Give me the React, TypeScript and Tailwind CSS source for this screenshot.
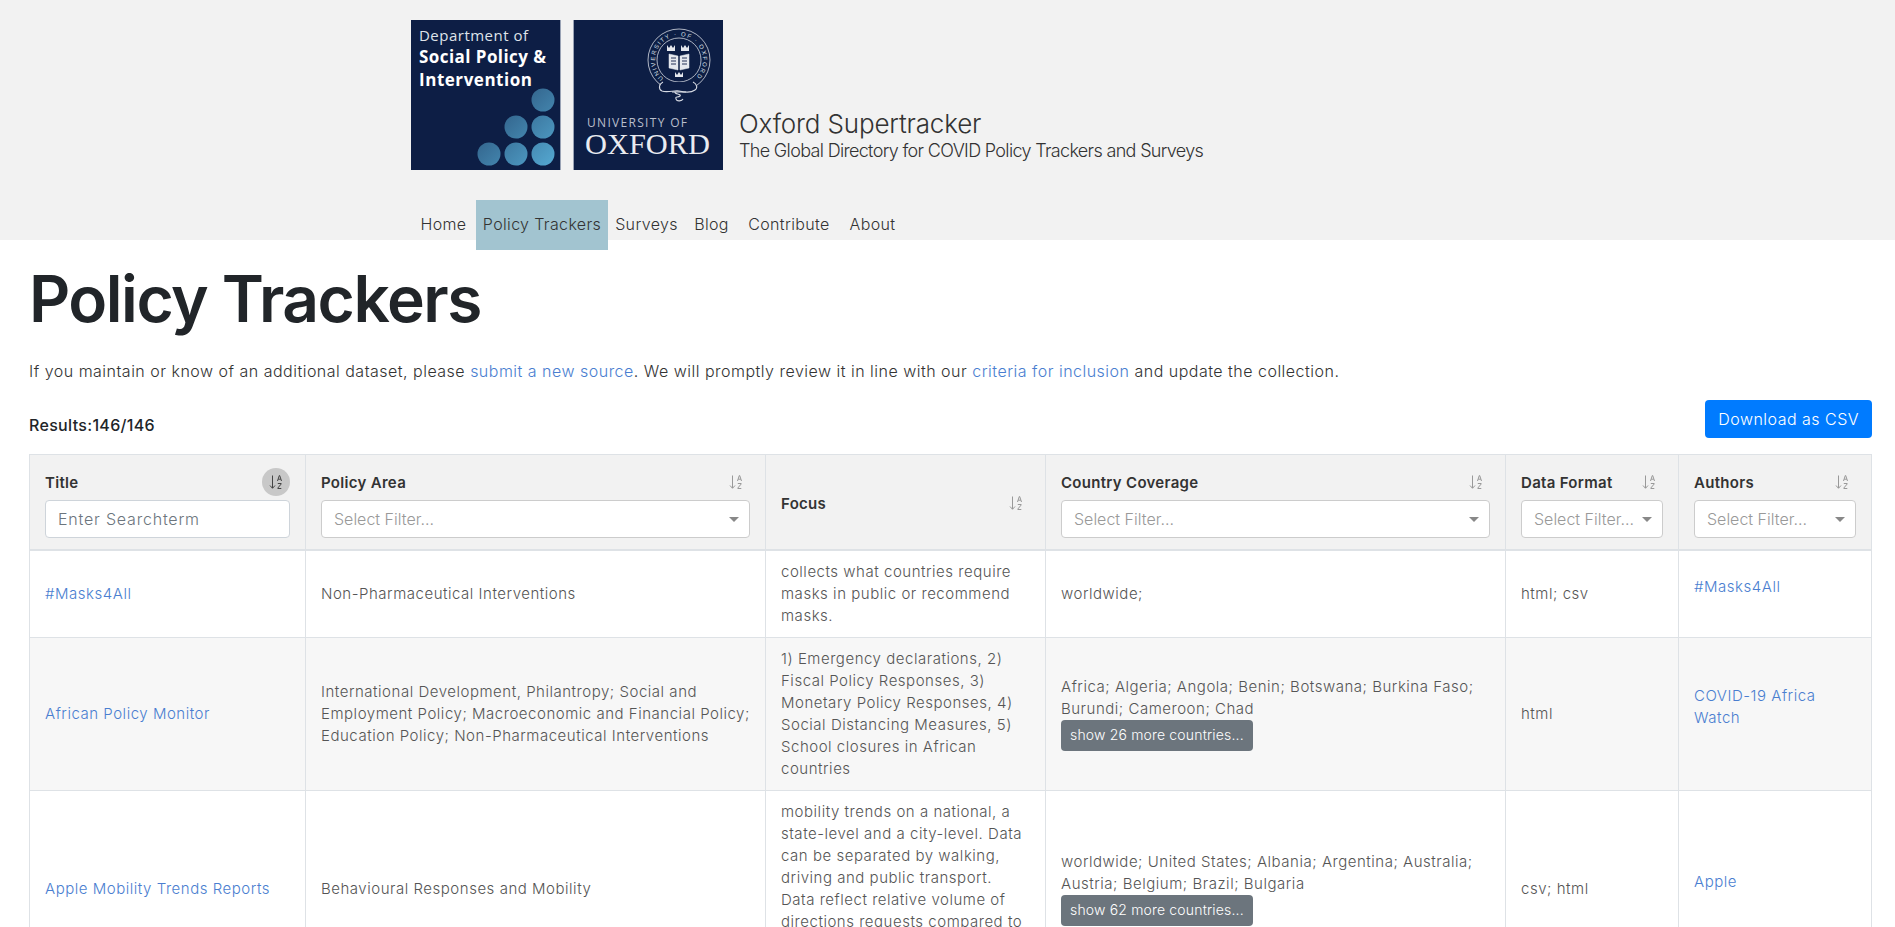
import React from 'react';

const SortIcon = ({ active }: { active?: boolean }) => (
  <span className={`flex h-7 w-7 items-center justify-center rounded-full ${active ? 'bg-[#c8c8c8] text-[#444]' : 'text-[#999]'}`}>
    <svg width="16" height="16" viewBox="0 0 16 16" fill="none" stroke="currentColor" strokeWidth="1">
      <path d="M4.5 1.5v12.5M2 11.5l2.5 2.8 2.5-2.8" />
      <path d="M9.5 7l1.8-5.5h.4L13.500 7M10.200 5.200h2.600" />
      <path d="M9.800 9.500h3.400v.5l-3.400 4v.5h3.500" />
    </svg>
  </span>
);

const FilterSelect = () => (
  <div className="mt-[4px] flex h-[38px] items-center rounded border border-[#cccccc] bg-white pl-[12px] pr-[10px] text-[16px] font-light tracking-normal text-[#999]">
    <span className="min-w-0 flex-1 truncate">Select Filter...</span>
    <span className="ml-1 h-0 w-0 border-x-[5px] border-t-[5px] border-x-transparent border-t-[#888]" />
  </div>
);

const Header = ({ title, filter, sort }: { title: string; filter?: React.ReactNode; sort?: boolean }) => (
  <th className="border border-[#dee2e6] border-b-2 px-[15px] pb-[11px] pt-[13px] text-left align-middle">
    <div className="flex h-7 items-center justify-between">
      <span className="pt-[1px] text-[15px] font-semibold tracking-[0.02em] text-[#333]">{title}</span>
      <SortIcon active={sort} />
    </div>
    {filter}
  </th>
);

const DeptLogo = () => (
  <svg width="150" height="150" viewBox="0 0 150 150" className="shrink-0">
    <defs>
      <linearGradient id="dots" gradientUnits="userSpaceOnUse" x1="80" y1="80" x2="145" y2="145">
        <stop offset="0" stopColor="#2a537b" />
        <stop offset="1" stopColor="#55a9d2" />
      </linearGradient>
    </defs>
    <rect width="150" height="150" fill="#0d1e45" />
    <rect x="149" width="1" height="150" fill="#9aa3b5" />
    <g fontFamily="'Open Sans', sans-serif" fill="#fff">
      <text x="8" y="21" fontSize="15" textLength="109" fill="#dfe3ea">Department of</text>
      <text x="8" y="43" fontSize="17" fontWeight="700" textLength="127">Social Policy &amp;</text>
      <text x="8" y="66" fontSize="17" fontWeight="700" textLength="113">Intervention</text>
    </g>
    {[[132, 80], [105, 107], [132, 107], [78, 134], [105, 134], [132, 134]].map(([cx, cy]) => (
      <circle key={`${cx}-${cy}`} cx={cx} cy={cy} r="11.500" fill="url(#dots)" />
    ))}
  </svg>
);

const OxfordLogo = () => (
  <svg width="150" height="150" viewBox="0 0 150 150" className="shrink-0">
    <rect width="150" height="150" fill="#0d1e45" />
    <rect width="1" height="150" fill="#9aa3b5" />
    <g fill="none" stroke="#d5d9e2">
      <circle cx="106" cy="40" r="31" strokeWidth="0.8" />
      <circle cx="106" cy="40" r="22" strokeWidth="0.8" />
      <path d="M96 34v14l9 2V36zM116 34v14l-9 2V36z" fill="#e5e8ee" stroke="#e5e8ee" strokeWidth="0.5" />
      <path d="M98 38h5M98 41h5M98 44h5M109 38h5M109 41h5M109 44h5" stroke="#0d1e45" strokeWidth="0.9" />
      <path d="M94 25l2 3 2-3 2 3 2-3v6h-8zM108 25l2 3 2-3 2 3 2-3v6h-8zM102 52l2 3 2-3 2 3 2-3v5h-8z" fill="#e5e8ee" stroke="none" />
      <path d="M90 62c-4 2-5 7-1 9 5 2 13-1 17 0s12 2 16-1c3-2 2-6-2-8" strokeWidth="1.100" fill="#0d1e45" />
      <path d="M99 72h14M102 72c-1 2 7 2 5 4s-5 0-4 3 6 2 7 0" strokeWidth="1.100" />
    </g>
    <path id="seal" d="M90.600 58.400a24 24 0 1 1 30.800 0" fill="none" />
    <text fontFamily="'Liberation Sans', sans-serif" fontSize="6" fill="#dfe3ea">
      <textPath href="#seal" textLength="114">UNIVERSITY · OF · OXFORD</textPath>
    </text>
    <text x="14" y="107" fontFamily="'Open Sans', sans-serif" fontSize="12" fill="#b9bfcc" textLength="100">UNIVERSITY OF</text>
    <text x="12" y="134" fontFamily="'Liberation Serif', serif" fontSize="30" fill="#e9ebf0" textLength="125" lengthAdjust="spacingAndGlyphs">OXFORD</text>
  </svg>
);

const CountryButton = ({ n }: { n: number }) => (
  <button className="mb-[2px] block h-[31px] rounded bg-[#6c757d] px-[9px] text-[14px] font-light tracking-[0.012em] text-white">
    show {n} more countries...
  </button>
);

const cell = 'border border-[#dee2e6] px-[15px] py-[10px] align-middle';

const navItems = [
  { label: 'Home', width: 'w-[65px]' },
  { label: 'Policy Trackers', width: 'w-[132px] bg-[#a2c4d0]' },
  { label: 'Surveys', width: 'w-[77px]' },
  { label: 'Blog', width: 'w-[53px]' },
  { label: 'Contribute', width: 'w-[102px]' },
  { label: 'About', width: 'w-[65px]' },
];

const rows = [
  {
    title: '#Masks4All',
    area: 'Non-Pharmaceutical Interventions',
    focus: 'collects what countries require masks in public or recommend masks.',
    countries: 'worldwide;',
    more: 0,
    format: 'html; csv',
    authors: '#Masks4All',
  },
  {
    title: 'African Policy Monitor',
    area: 'International Development, Philantropy; Social and Employment Policy; Macroeconomic and Financial Policy; Education Policy; Non-Pharmaceutical Interventions',
    focus: '1) Emergency declarations, 2) Fiscal Policy Responses, 3) Monetary Policy Responses, 4) Social Distancing Measures, 5) School closures in African countries',
    countries: 'Africa; Algeria; Angola; Benin; Botswana; Burkina Faso; Burundi; Cameroon; Chad',
    more: 26,
    format: 'html',
    authors: 'COVID-19 Africa Watch',
  },
  {
    title: 'Apple Mobility Trends Reports',
    area: 'Behavioural Responses and Mobility',
    focus: 'mobility trends on a national, a state-level and a city-level. Data can be separated by walking, driving and public transport. Data reflect relative volume of directions requests compared to a baseline volume on January 13th, 2020.',
    countries: 'worldwide; United States; Albania; Argentina; Australia; Austria; Belgium; Brazil; Bulgaria',
    more: 62,
    format: 'csv; html',
    authors: 'Apple',
  },
];

export default function App() {
  return (
    <div className="h-screen overflow-hidden bg-white font-['Inter',sans-serif] text-[#212529]">
      <header className="h-[240px] bg-[#f2f2f2]">
        <div className="flex pl-[411px] pt-[20px]">
          <DeptLogo />
          <div className="ml-[12px]"><OxfordLogo /></div>
          <div className="ml-[16px] self-end pb-[8px] font-light text-[#333]">
            <div className="text-[26px] leading-[32px] tracking-[-0.006em]">Oxford Supertracker</div>
            <div className="text-[18px] leading-[22px] tracking-[-0.037em]">The Global Directory for COVID Policy Trackers and Surveys</div>
          </div>
        </div>
        <nav className="mt-[30px] flex pl-[411px] text-[16px] font-light tracking-[0.022em] text-[#333]">
          {navItems.map((item) => (
            <a key={item.label} href="#" className={`flex h-[50px] items-center justify-center pb-[2px] ${item.width}`}>
              {item.label}
            </a>
          ))}
        </nav>
      </header>

      <main className="pl-[29px] pr-[23px]">
        <h1 className="pt-[16px] text-[64px] font-semibold leading-[86px] tracking-[-0.023em]">Policy Trackers</h1>
        <p className="mt-[17px] text-[16px] font-light leading-[24px] tracking-[0.0306em] text-[#333]">
          If you maintain or know of an additional dataset, please{' '}
          <a href="#" className="text-[#4a7ed0]">submit a new source</a>. We will promptly review it in line with our{' '}
          <a href="#" className="text-[#4a7ed0]">criteria for inclusion</a> and update the collection.
        </p>
        <div className="mt-[17px] flex items-start justify-between">
          <span className="pt-[13px] text-[16px] font-medium tracking-[0.02em]">Results:146/146</span>
          <button className="h-[38px] rounded bg-[#007bff] px-[13px] pb-[1px] text-[16px] font-light tracking-[0.03em] text-white">Download as CSV</button>
        </div>

        <table className="mt-[16px] w-[1842px] table-fixed border-collapse text-[15px] font-light leading-[22px] tracking-[0.035em] text-[#555]">
          <colgroup>
            <col className="w-[276px]" />
            <col className="w-[460px]" />
            <col className="w-[280px]" />
            <col className="w-[460px]" />
            <col className="w-[173px]" />
            <col className="w-[193px]" />
          </colgroup>
          <thead className="bg-[#f2f2f2]">
            <tr>
              <Header
                title="Title"
                sort
                filter={
                  <input
                    placeholder="Enter Searchterm"
                    className="mt-[4px] h-[38px] w-full rounded border border-[#ced4da] bg-white px-[12px] text-[16px] font-light tracking-[0.05em] placeholder:text-[#6c757d]"
                  />
                }
              />
              <Header title="Policy Area" filter={<FilterSelect />} />
              <Header title="Focus" />
              <Header title="Country Coverage" filter={<FilterSelect />} />
              <Header title="Data Format" filter={<FilterSelect />} />
              <Header title="Authors" filter={<FilterSelect />} />
            </tr>
          </thead>
          <tbody>
            {rows.map((row, i) => (
              <tr key={row.title} className={i % 2 === 1 ? 'bg-[#f7f7f7]' : ''}>
                <td className={cell}><a href="#" className="text-[#4a7ed0]">{row.title}</a></td>
                <td className={cell}>{row.area}</td>
                <td className={cell}>{row.focus}</td>
                <td className={cell}>
                  {row.countries}
                  {row.more > 0 && <CountryButton n={row.more} />}
                </td>
                <td className={cell}>{row.format}</td>
                <td className={cell}>
                  <div className="mb-[14px]"><a href="#" className="text-[#4a7ed0]">{row.authors}</a></div>
                </td>
              </tr>
            ))}
          </tbody>
        </table>
      </main>
    </div>
  );
}
